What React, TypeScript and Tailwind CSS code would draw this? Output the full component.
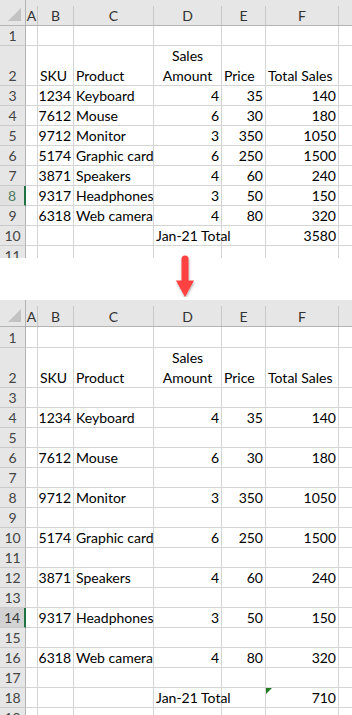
import React from "react";

type Val = string | number | null;
type RowDef = {
  n: number;
  h: string;
  cells?: Val[];
  head?: boolean;
  sel?: "light" | "dark";
  flag?: boolean;
};

const COLS = "grid grid-cols-[26px_12px_36px_80px_68px_44px_73px_1fr]";

function Cell({ v, idx, flag }: { v: Val; idx: number; flag?: boolean }) {
  const isNum = typeof v === "number";
  const overflow = v === "Jan-21 Total";
  return (
    <div
      className={`relative flex items-end border-r border-b border-[#d4d4d4] leading-[19px] whitespace-nowrap ${
        isNum ? "justify-end pr-[2px]" : "justify-start pl-[2px]"
      } ${overflow ? "overflow-visible z-10" : ""}`}
    >
      {flag && idx === 5 && (
        <svg className="absolute left-0 top-0" width="6" height="6" viewBox="0 0 6 6">
          <polygon points="0,0 6,0 0,6" fill="#1f7a1f" />
        </svg>
      )}
      {v !== null && <span>{v}</span>}
    </div>
  );
}

function HeadRowCells() {
  return (
    <>
      <div className="border-r border-b border-[#d4d4d4] flex items-end justify-start pl-[2px] leading-[19px]">
        <span></span>
      </div>
      <div className="border-r border-b border-[#d4d4d4] flex items-end justify-start pl-[2px] leading-[19px]">
        <span>SKU</span>
      </div>
      <div className="border-r border-b border-[#d4d4d4] flex items-end justify-start pl-[2px] leading-[19px]">
        <span>Product</span>
      </div>
      <div className="border-r border-b border-[#d4d4d4] flex flex-col items-center justify-end leading-[20px] pb-0">
        <span>Sales</span>
        <span className="leading-[19px]">Amount</span>
      </div>
      <div className="border-r border-b border-[#d4d4d4] flex items-end justify-start pl-[2px] leading-[19px]">
        <span>Price</span>
      </div>
      <div className="border-r border-b border-[#d4d4d4] flex items-end justify-start pl-[2px] leading-[19px]">
        <span>Total Sales</span>
      </div>
      <div className="border-b border-[#d4d4d4]"></div>
    </>
  );
}

function Row({ r }: { r: RowDef }) {
  const hdr =
    r.sel === "dark"
      ? "bg-[#d2d2d2] text-[#3a3a3a] border-r-2 border-r-[#217346]"
      : r.sel === "light"
      ? "bg-[#e1e1e1] text-[#4f7a60] border-r-2 border-r-[#217346]"
      : "bg-[#e6e6e6] text-[#444444] border-r border-r-[#b4b4b4]";
  const cells: Val[] = r.cells ?? [null, null, null, null, null, null, null];
  return (
    <div className={`${COLS} ${r.h}`}>
      <div className={`flex items-end justify-center leading-[19px] border-b border-b-[#cacaca] ${hdr}`}>
        <span>{r.n}</span>
      </div>
      {r.head ? (
        <HeadRowCells />
      ) : (
        cells.map((v, i) =>
          i === 6 ? (
            <div key={i} className="border-b border-[#d4d4d4]"></div>
          ) : (
            <Cell key={i} v={v} idx={i} flag={r.flag} />
          )
        )
      )}
    </div>
  );
}

function ColHeader({ h }: { h: string }) {
  const letters = ["A", "B", "C", "D", "E", "F"];
  return (
    <div className={`${COLS} ${h} bg-[#e6e6e6] border-b border-[#b4b4b4] text-[#333333]`}>
      <div className="flex items-end justify-end border-r border-[#b4b4b4] pr-[3px] pb-[3px]">
        <svg width="14" height="14" viewBox="0 0 14 14">
          <polygon points="13,0 13,13 0,13" fill="#c2c2c2" />
        </svg>
      </div>
      {letters.map((l) => (
        <div
          key={l}
          className="mt-[6px] flex items-end justify-center border-r border-[#c8c8c8] leading-[18px]"
        >
          <span>{l}</span>
        </div>
      ))}
      <div></div>
    </div>
  );
}

const E: Val[] = [null, null, null, null, null, null, null];
const data: Val[][] = [
  [null, 1234, "Keyboard", 4, 35, 140, null],
  [null, 7612, "Mouse", 6, 30, 180, null],
  [null, 9712, "Monitor", 3, 350, 1050, null],
  [null, 5174, "Graphic card", 6, 250, 1500, null],
  [null, 3871, "Speakers", 4, 60, 240, null],
  [null, 9317, "Headphones", 3, 50, 150, null],
  [null, 6318, "Web camera", 4, 80, 320, null],
];

const rows1: RowDef[] = [
  { n: 1, h: "h-[20px]" },
  { n: 2, h: "h-[40px]", head: true },
  ...data.map((d, i) => ({
    n: i + 3,
    h: "h-[20px]",
    cells: d,
    sel: i + 3 === 8 ? ("light" as const) : undefined,
  })),
  { n: 10, h: "h-[20px]", cells: [null, null, null, "Jan-21 Total", null, 3580, null] },
  { n: 11, h: "h-[20px]" },
];

const rows2: RowDef[] = [
  { n: 1, h: "h-[21px]" },
  { n: 2, h: "h-[40px]", head: true },
];
{
  let n = 3;
  for (const d of data) {
    rows2.push({ n: n++, h: "h-[20px]", cells: E });
    rows2.push({ n: n, h: "h-[20px]", cells: d, sel: n === 14 ? "dark" : undefined });
    n++;
  }
  rows2.push({ n: 17, h: "h-[20px]", cells: E });
  rows2.push({
    n: 18,
    h: "h-[20px]",
    cells: [null, null, null, "Jan-21 Total", null, 710, null],
    flag: true,
  });
  rows2.push({ n: 19, h: "h-[20px]" });
}

function Arrow() {
  return (
    <div className="h-[42px] flex pl-[174px]">
      <svg width="24" height="42" viewBox="0 0 24 42" className="-mt-[3px]">
        <defs>
          <filter id="sh" x="-50%" y="-20%" width="200%" height="150%">
            <feDropShadow dx="0.5" dy="1.5" stdDeviation="1.2" floodColor="#000" floodOpacity="0.35" />
          </filter>
        </defs>
        <g filter="url(#sh)">
          <rect x="7.5" y="0.5" width="7" height="28" rx="3.5" fill="#fe4242" />
          <polygon points="2,25.5 20,25.5 11,42" fill="#fe4242" />
        </g>
      </svg>
    </div>
  );
}

export default function App() {
  return (
    <div className="w-[352px] h-[715px] overflow-hidden bg-white text-black text-[14px] [font-family:Lato,'Liberation_Sans',sans-serif]">
      <div className="h-[258px] overflow-hidden">
        <ColHeader h="h-[26px]" />
        {rows1.map((r) => (
          <Row key={r.n} r={r} />
        ))}
      </div>
      <Arrow />
      <div className="h-[415px] overflow-hidden">
        <ColHeader h="h-[27px]" />
        {rows2.map((r) => (
          <Row key={r.n} r={r} />
        ))}
      </div>
    </div>
  );
}
